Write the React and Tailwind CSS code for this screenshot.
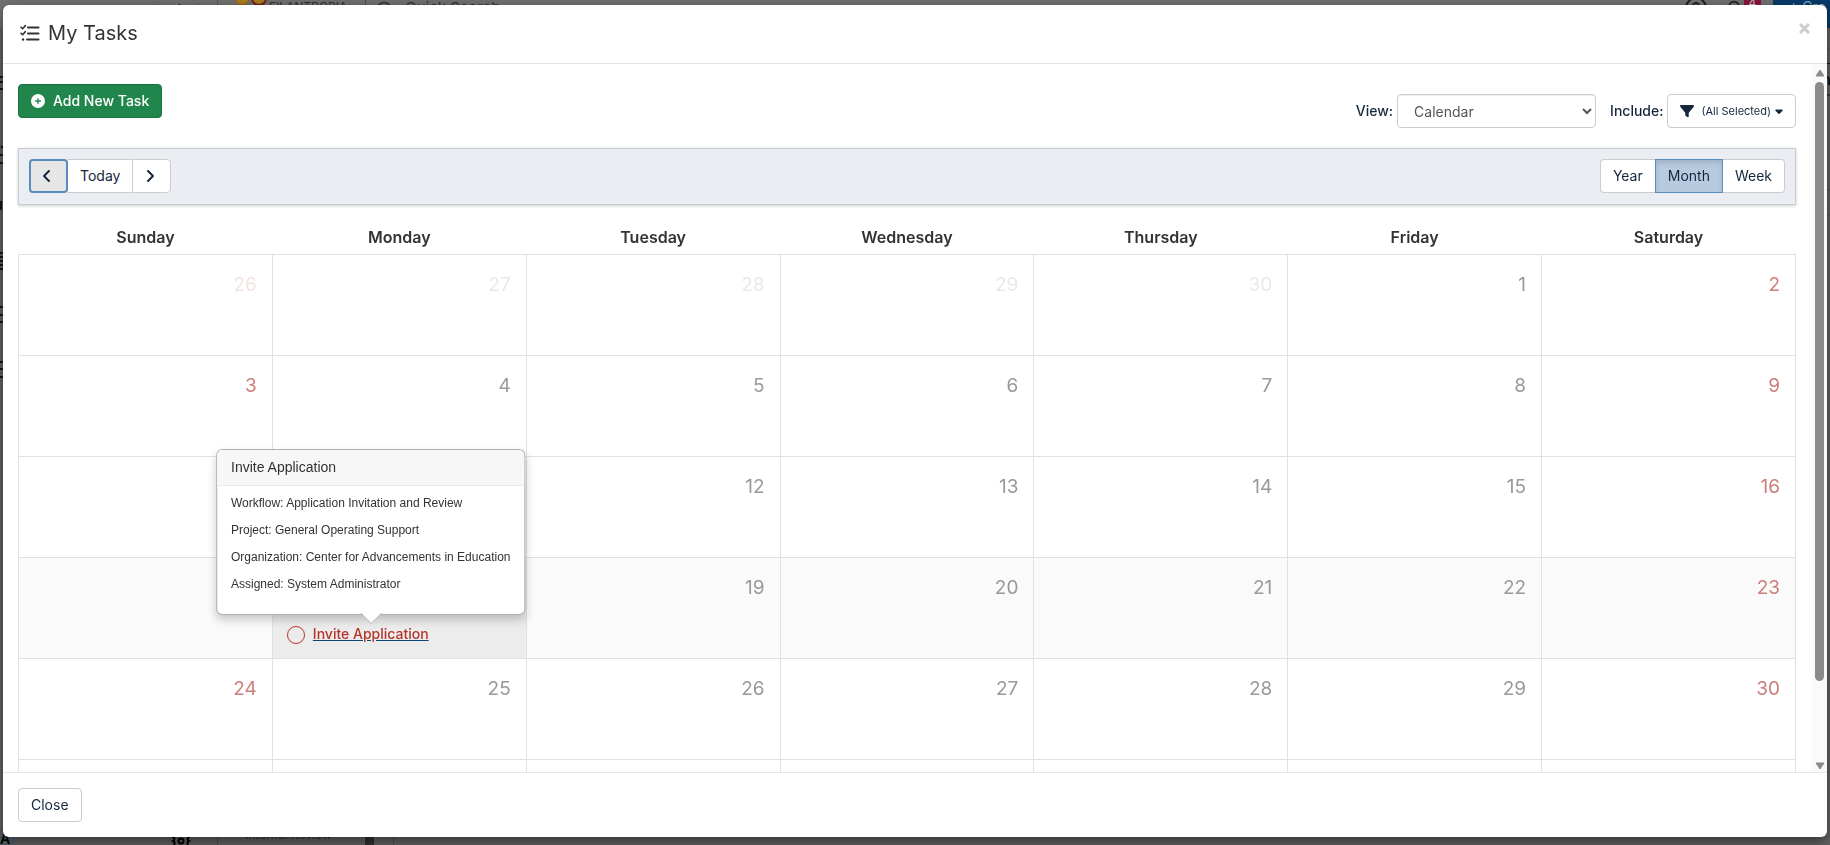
import { Bell, ChevronLeft, CircleQuestionMark, Search } from "lucide-react";
import { FaCirclePlus, FaFilter, FaAngleLeft, FaAngleRight, FaCaretDown } from "react-icons/fa6";

const DAYS = ["Sunday", "Monday", "Tuesday", "Wednesday", "Thursday", "Friday", "Saturday"];

const WEEKS = [
  [26, 27, 28, 29, 30, 1, 2],
  [3, 4, 5, 6, 7, 8, 9],
  [10, 11, 12, 13, 14, 15, 16],
  [17, 18, 19, 20, 21, 22, 23],
  [24, 25, 26, 27, 28, 29, 30],
];

const CURRENT_WEEK = 3;
const CURRENT_DAY = 1;

const TASK = {
  title: "Invite Application",
  details: [
    "Workflow: Application Invitation and Review",
    "Project: General Operating Support",
    "Organization: Center for Advancements in Education",
    "Assigned: System Administrator",
  ],
};

function dateColor(week, day, date) {
  const outside = week === 0 && date > 7;
  const weekend = day === 0 || day === 6;
  if (outside) return weekend ? "text-[#f3e4e3]" : "text-[#e9e9e9]";
  return weekend ? "text-[#cb7f7b]" : "text-[#999999]";
}

function cellColor(week, day) {
  if (week !== CURRENT_WEEK) return "bg-white";
  return day === CURRENT_DAY ? "bg-[#ececec]" : "bg-[#fafafa]";
}

/* The application behind the dialog, dimmed. */
function Backdrop() {
  return (
    <div aria-hidden="true" className="fixed inset-0 flex flex-col overflow-hidden bg-[#656565] text-[#333333]">
      <div className="flex h-7 shrink-0 items-start justify-between bg-[#727272]">
        <div className="flex items-start">
          <div className="ml-[154px] flex h-7 w-[46px] items-start justify-center rounded-t-lg border-x border-[#666666]">
            <ChevronLeft className="size-5 text-black" />
          </div>
          <div className="ml-[17px] h-7 w-px bg-[#5c5c5c]" />
          <svg className="ml-[17px] h-3 w-8" viewBox="0 0 32 12">
            <circle cx="7" cy="-2" r="7" fill="#a8801c" stroke="#a35a1c" />
            <circle cx="24" cy="-2" r="7" fill="#a8801c" stroke="#7c1c1c" strokeWidth="2" />
          </svg>
          <span className="ml-[2px] text-xs leading-[13px]">FILANTROPIA</span>
          <div className="ml-[18px] h-7 w-px bg-[#44505c]" />
          <Search className="ml-[9px] size-5" />
          <span className="ml-[10px] text-[15px] leading-[15px]">Quick Search</span>
        </div>
        <div className="flex items-start">
          <CircleQuestionMark className="-mt-1 size-6 text-[#1c242c]" />
          <Bell className="ml-4 size-5 text-[#1c242c]" />
          <span className="mr-3 h-[14px] w-[17px] rounded-b bg-[#8c1440] text-center text-xs leading-[5px] text-[#c0c0c0]">4</span>
          <span className="h-7 w-[57px] bg-[#073c6d] pl-4 text-sm leading-[14px] whitespace-nowrap text-[#8fa6ba]">+ Cre</span>
        </div>
      </div>
      <div className="flex flex-1 justify-between">
        <svg className="h-[400px] w-[3px]" viewBox="0 0 3 400">
          <path
            d="M0 49H3M0 54H3M0 61H3M1 118L3 120M0 127H3M0 135H3M1 173V182M0 225H3M0 229H3M0 233H3M0 237H3M0 241H3M0 279H3M0 287H3M0 294H3M0 334H3M0 341H3M0 349H3"
            stroke="#10161c"
            strokeWidth="2"
          />
        </svg>
        <svg className="h-[400px] w-1" viewBox="0 0 4 400">
          <path d="M0 35.5H4M0 67H4" stroke="#10161c" strokeWidth="1" />
          <path d="M0 21H4M0 162H4M0 187H4" stroke="#50575e" />
          <path d="M0 50Q3 48 3 52V57" stroke="#10161c" strokeWidth="2" fill="none" />
        </svg>
      </div>
      <div className="flex h-[17px] shrink-0 items-end">
        <span className="h-[17px] w-[15px] bg-[#55606a] pt-1 text-sm leading-[14px] font-semibold text-black">A</span>
        <svg className="ml-[156px] h-2 w-5 text-black" viewBox="0 0 20 8" fill="none" stroke="currentColor" strokeWidth="2">
          <circle cx="10" cy="4" r="2.5" />
          <path d="M1 0C4 0 4 3 2 4C4 5 4 6 3 8M19 0C16 0 16 3 18 4C16 5 16 6 17 8" />
        </svg>
        <div className="ml-[26px] h-[17px] w-px bg-[#505050]" />
        <span className="ml-[27px] h-[17px] w-[86px] text-xs leading-[14px] whitespace-nowrap">Internal Review</span>
        <div className="ml-[34px] h-[17px] w-[9px] bg-[#333333]" />
        <div className="ml-[19px] h-[17px] w-px bg-[#505050]" />
      </div>
    </div>
  );
}

function TaskPopover() {
  return (
    <div
      role="tooltip"
      className="absolute bottom-full left-1/2 z-10 mb-[9px] w-max -translate-x-1/2 rounded-md border border-black/30 bg-white font-['Liberation_Sans',Arial,sans-serif] text-[#333333] shadow-[0_5px_10px_rgba(0,0,0,0.2)]"
    >
      <div className="rounded-t-md border-b border-[#ebebeb] bg-[#f7f7f7] px-[14px] py-2 text-sm leading-[19px]">{TASK.title}</div>
      <div className="px-[14px] pt-2 pb-3 text-xs">
        {TASK.details.map((line) => (
          <p key={line} className="mb-[9px] leading-[18px]">{line}</p>
        ))}
      </div>
      <svg className="absolute top-full left-1/2 -mt-px h-[11px] w-[22px] -translate-x-1/2" viewBox="0 0 22 11" aria-hidden="true">
        <path d="M0 0L11 11L22 0Z" fill="#b3b3b3" />
        <path d="M1 0L11 10L21 0Z" fill="#ffffff" />
      </svg>
    </div>
  );
}

function Task() {
  return (
    <div className="flex items-center gap-2 pl-[14px]">
      <span className="mt-[2px] size-[18px] rounded-full border border-[#b5352b]" />
      <span className="relative">
        <a href="#task" className="block text-sm leading-5 font-medium text-[#b5352b] underline decoration-[#0a4579]">
          {TASK.title}
        </a>
        <TaskPopover />
      </span>
    </div>
  );
}

function TasksIcon() {
  return (
    <svg className="h-[18px] w-[22px]" viewBox="0 0 22 18" fill="none" stroke="currentColor" strokeWidth="2" strokeLinecap="round" strokeLinejoin="round" aria-hidden="true">
      <path d="M10 3.5H20.5M10 9.5H20.5M9 15.5H20.5" />
      <path d="M3 3.2L4.6 4.8L7.4 1.6M3 9.2L4.6 10.8L7.4 7.6" strokeWidth="1.6" />
      <path d="M5 15.5H5.1" strokeWidth="2.4" />
    </svg>
  );
}

function Scrollbar() {
  return (
    <div aria-hidden="true" className="flex w-[15px] shrink-0 flex-col items-center gap-[5px] bg-[#fafafa] pt-[5px] pb-[2px]">
      <svg className="h-[8px] w-[10px] shrink-0" viewBox="0 0 10 8"><path d="M5 1L9 7H1Z" fill="#8b8b8b" stroke="#8b8b8b" strokeLinejoin="round" /></svg>
      <div className="w-[9px] flex-[596] rounded-full bg-[#8b8b8b]" />
      <div className="flex-[71]" />
      <svg className="h-[8px] w-[10px] shrink-0" viewBox="0 0 10 8"><path d="M5 7L9 1H1Z" fill="#8b8b8b" stroke="#8b8b8b" strokeLinejoin="round" /></svg>
    </div>
  );
}

export default function App() {
  return (
    <div className="h-screen font-[Inter,sans-serif] text-sm text-[#333333]">
      <Backdrop />
      <div className="relative flex h-full px-[3px] pt-[5px] pb-2">
        <div role="dialog" aria-labelledby="title" className="flex flex-1 flex-col overflow-hidden rounded-md bg-white shadow-[0_5px_15px_rgba(0,0,0,0.5)]">
          <header className="flex shrink-0 items-start justify-between border-b border-[#e5e5e5] px-[15px] pt-[14px] pb-4">
            <h1 id="title" className="flex items-center gap-2 text-xl leading-7 font-normal">
              <TasksIcon />
              My Tasks
            </h1>
            <button type="button" aria-label="Close dialog" className="px-[2px] py-1 text-[#cccccc]">
              <svg className="size-[11px]" viewBox="0 0 11 11" fill="none" stroke="currentColor" strokeWidth="3" aria-hidden="true">
                <path d="M1 1L10 10M10 1L1 10" />
              </svg>
            </button>
          </header>

          <div className="flex min-h-0 flex-1">
            <main className="min-w-0 flex-1 overflow-hidden pt-5 pr-4 pl-[15px]">
              <div className="flex h-16 items-start justify-between">
                <button type="button" className="flex h-[34px] items-center gap-2 rounded border border-[#1a7340] bg-[#20864c] px-3 font-medium text-white">
                  <FaCirclePlus className="size-[14px]" />
                  Add New Task
                </button>
                <div className="mt-[10px] flex items-center gap-[14px] font-medium text-[#14273d]">
                  <div className="flex items-center gap-1">
                    <label htmlFor="view">View:</label>
                    <select id="view" className="h-[34px] w-[199px] rounded border border-[#cccccc] bg-white px-3 font-normal text-[#555555] shadow-[inset_0_1px_1px_rgba(0,0,0,0.075)]">
                      <option>Calendar</option>
                    </select>
                  </div>
                  <div className="flex items-center gap-1">
                    <span id="include">Include:</span>
                    <button type="button" aria-describedby="include" className="flex h-[34px] items-center rounded border border-[#cccccc] bg-white px-3 text-[11px] font-normal">
                      <FaFilter className="mr-[7px] size-[14px]" />
                      <span className="pt-[2px]">(All Selected)</span>
                      <FaCaretDown className="ml-1 h-3 w-2" />
                    </button>
                  </div>
                </div>
              </div>

              <div className="flex items-center justify-between border border-[#c8ccd1] bg-[#eaedf2] px-[10px] pt-[10px] pb-[11px] text-[#14273d] shadow-[0_1px_3px_rgba(0,0,0,0.2)]">
                <div className="flex h-[34px]">
                  <button type="button" aria-label="Previous" className="flex w-[39px] items-center justify-center rounded border-2 border-[#5b8cc0] bg-[#e6e6e6] pr-1">
                    <FaAngleLeft className="size-4" />
                  </button>
                  <button type="button" className="border-y border-[#cccccc] bg-white px-3">Today</button>
                  <button type="button" aria-label="Next" className="flex w-[39px] items-center justify-center rounded-r border border-[#cccccc] bg-white pr-1">
                    <FaAngleRight className="size-4" />
                  </button>
                </div>
                <div className="flex h-[34px]">
                  <button type="button" className="rounded-l border border-r-0 border-[#cccccc] bg-white px-3">Year</button>
                  <button type="button" aria-pressed="true" className="border border-[#5b8cc0] bg-[#b7cbe0] px-3 shadow-[inset_0_3px_5px_rgba(0,0,0,0.125)]">Month</button>
                  <button type="button" className="rounded-r border border-l-0 border-[#cccccc] bg-white px-3">Week</button>
                </div>
              </div>

              <table className="mt-[14px] w-full table-fixed border-collapse">
                <thead>
                  <tr className="h-[35px]">
                    {DAYS.map((day) => (
                      <th key={day} scope="col" className="pt-[2px] text-base leading-6 font-semibold">{day}</th>
                    ))}
                  </tr>
                </thead>
                <tbody>
                  {WEEKS.map((week, w) => (
                    <tr key={w} className="h-[101px]">
                      {week.map((date, d) => (
                        <td key={d} className={`border border-[#e1e1e1] p-0 align-top ${cellColor(w, d)}`}>
                          <div className={`pt-4 pr-[15px] pb-[22px] text-right text-[19px] leading-7 ${dateColor(w, d, date)}`}>{date}</div>
                          {w === CURRENT_WEEK && d === CURRENT_DAY && <Task />}
                        </td>
                      ))}
                    </tr>
                  ))}
                  <tr className="h-[101px]">
                    {DAYS.map((day) => (
                      <td key={day} className="border border-[#e1e1e1]" />
                    ))}
                  </tr>
                </tbody>
              </table>
            </main>
            <Scrollbar />
          </div>

          <footer className="shrink-0 border-t border-[#e5e5e5] p-[15px]">
            <button type="button" className="h-[34px] rounded border border-[#cccccc] bg-white px-3 text-[#14273d]">Close</button>
          </footer>
        </div>
      </div>
    </div>
  );
}
